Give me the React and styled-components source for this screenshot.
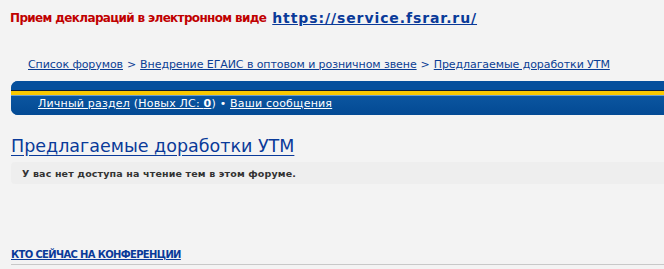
import React from "react";
import styled, { createGlobalStyle } from "styled-components";

const Global = createGlobalStyle`
  html, body { margin: 0; padding: 0; background: #f3f3f3; overflow: hidden; }
  body { font-family: "DejaVu Sans", Verdana, sans-serif; }
`;

const Page = styled.div`
  width: 700px;
  padding: 0 0 0 11px;
`;

const Notice = styled.div`
  padding-top: 7px;
  height: 21px;
  margin-left: -1px;
  font-size: 12px;
  font-weight: bold;
  color: #c00000;
  display: flex;
  gap: 6px;
  align-items: center;
`;

const NoticeText = styled.span`
  letter-spacing: -0.65px;
`;

const NoticeLink = styled.a`
  color: #0a3a99;
  text-decoration: underline;
  font-size: 14px;
  letter-spacing: 0.9px;
`;

const Crumbs = styled.div`
  margin-top: 28px;
  padding-left: 17px;
  font-size: 11px;
  letter-spacing: -0.08px;
  color: #0b3e94;
  height: 16px;
  display: flex;
  align-items: center;
  gap: 4px;
`;

const CrumbLink = styled.a`
  color: #0b3e94;
  text-decoration: underline;
`;

const NavBar = styled.div`
  margin-top: 9px;
  height: 34px;
  border-radius: 7px 0 0 7px;
  background: #034e9b;
  display: flex;
  flex-direction: column;
  overflow: hidden;
`;

const NavTop = styled.div`
  height: 9px;
  background: #054f9c;
  border-bottom: 1px solid #0d1a33;
`;

const NavStripe = styled.div`
  height: 4px;
  background: #f9c800;
  border-bottom: 1px solid #6d9fd0;
`;

const NavLinks = styled.div`
  flex: 1;
  padding-left: 27px;
  padding-bottom: 4px;
  display: flex;
  align-items: center;
  font-size: 11px;
  letter-spacing: 0.2px;
  color: #ffffff;
  white-space: pre;
  background: linear-gradient(#0b559f, #034a94);
`;

const NavLink = styled.a`
  color: #ffffff;
  text-decoration: underline;
`;

const Title = styled.h2`
  margin: 20px 0 0 0;
  font-size: 17.5px;
  font-weight: normal;
  height: 23px;
  line-height: 23px;
`;

const TitleLink = styled.a`
  color: #0a3a99;
  text-decoration: underline;
  text-underline-offset: 3px;
`;

const Message = styled.div`
  margin-top: 4px;
  height: 22px;
  background: #eeeeee;
  border-radius: 4px 0 0 4px;
  padding-left: 11px;
  display: flex;
  align-items: center;
  font-size: 9.5px;
  letter-spacing: 0.15px;
  font-weight: bold;
  color: #333333;
`;

const Online = styled.div`
  margin-top: 65px;
  padding-bottom: 4px;
  border-bottom: 1px solid #c8c8c8;
  font-size: 10px;
  letter-spacing: -0.65px;
  font-weight: bold;
  text-transform: uppercase;
`;

const OnlineLink = styled.a`
  color: #0a3a99;
  text-decoration: underline;
`;

export default function App() {
  return (
    <Page>
      <Global />
      <Notice>
        <NoticeText>Прием деклараций в электронном виде</NoticeText>
        <NoticeLink href="#">https://service.fsrar.ru/</NoticeLink>
      </Notice>
      <Crumbs>
        <CrumbLink href="#">Список форумов</CrumbLink>
        <span>&gt;</span>
        <CrumbLink href="#">Внедрение ЕГАИС в оптовом и розничном звене</CrumbLink>
        <span>&gt;</span>
        <CrumbLink href="#">Предлагаемые доработки УТМ</CrumbLink>
      </Crumbs>
      <NavBar>
        <NavTop />
        <NavStripe />
        <NavLinks>
          <NavLink href="#">Личный раздел</NavLink>
          {" ("}
          <NavLink href="#">Новых ЛС: <b>0</b></NavLink>
          {") • "}
          <NavLink href="#">Ваши сообщения</NavLink>
        </NavLinks>
      </NavBar>
      <Title>
        <TitleLink href="#">Предлагаемые доработки УТМ</TitleLink>
      </Title>
      <Message>У вас нет доступа на чтение тем в этом форуме.</Message>
      <Online>
        <OnlineLink href="#">Кто сейчас на конференции</OnlineLink>
      </Online>
    </Page>
  );
}
